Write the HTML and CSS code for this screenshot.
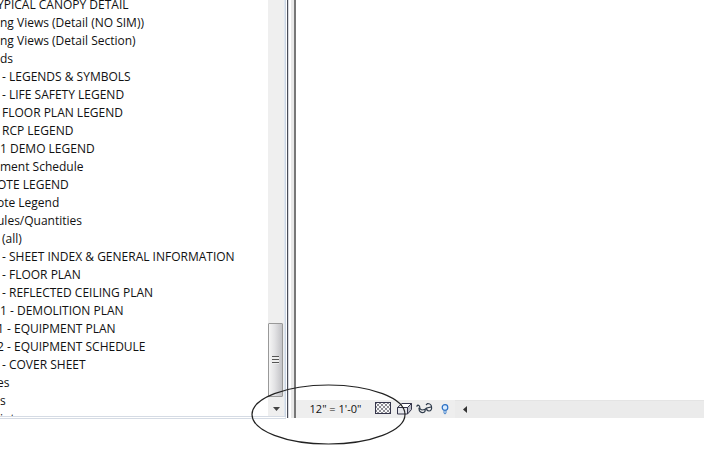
FILE: index.html
```
<!DOCTYPE html>
<html lang="en">
<head>
    <meta charset="UTF-8">
    <meta name="viewport" content="width=device-width, initial-scale=1.0">
    <title>Project Browser</title>
    <link rel="stylesheet" href="styles.css">
</head>
<body>
    <div class="workspace">

        <!-- project browser tree -->
        <div class="browser">
            <ul class="tree">
                <li class="cut">YPICAL CANOPY DETAIL</li>
                <li>ng Views (Detail (NO SIM))</li>
                <li>ng Views (Detail Section)</li>
                <li>ds</li>
                <li class="sub">- LEGENDS &amp; SYMBOLS</li>
                <li class="sub">- LIFE SAFETY LEGEND</li>
                <li class="sub">FLOOR PLAN LEGEND</li>
                <li class="sub">RCP LEGEND</li>
                <li>1 DEMO LEGEND</li>
                <li>ment Schedule</li>
                <li class="cut">OTE LEGEND</li>
                <li class="cut">ote Legend</li>
                <li class="cut">ules/Quantities</li>
                <li class="sub">(all)</li>
                <li class="sub">- SHEET INDEX &amp; GENERAL INFORMATION</li>
                <li class="sub">- FLOOR PLAN</li>
                <li class="sub">- REFLECTED CEILING PLAN</li>
                <li>1 - DEMOLITION PLAN</li>
                <li class="cut">1 - EQUIPMENT PLAN</li>
                <li class="cut">2 - EQUIPMENT SCHEDULE</li>
                <li class="sub">- COVER SHEET</li>
                <li class="cut">es</li>
                <li>s</li>
                <li>int</li>
            </ul>
            <div class="scrollbar">
                <div class="thumb"><span class="grip"></span></div>
                <button class="scroll-down" type="button" aria-label="Scroll down">
                    <svg width="7" height="4" viewBox="0 0 7 4"><path d="M0 0h7L3.500 4z" fill="#444"/></svg>
                </button>
            </div>
        </div>

        <div class="splitter"></div>

        <!-- drawing area with the view control bar -->
        <div class="view">
            <div class="canvas"></div>
            <div class="control-bar">
                <button class="scale" type="button">12" = 1'-0"</button>
                <button class="tool" type="button" aria-label="Detail level">
                    <svg width="19" height="15" viewBox="0 0 19 15">
                        <defs>
                            <pattern id="check" width="4" height="4" patternUnits="userSpaceOnUse">
                                <rect width="4" height="4" fill="#f8f8fa"/>
                                <path d="M0 0h2v2H0zM2 2h2v2H2z" fill="#8e8e94"/>
                            </pattern>
                        </defs>
                        <rect x=".5" y=".5" width="15" height="11" fill="url(#check)" stroke="#34344a"/>
                    </svg>
                </button>
                <button class="tool" type="button" aria-label="Visual style">
                    <svg width="16" height="15" viewBox="0 0 16 15">
                        <path d="M.5 5.500L5 1.500h9.500l-4 4z" fill="#fff" stroke="#34344a"/>
                        <path d="M10.500 5.500l4-4v6l-4 4.500z" fill="#b9bcc6" stroke="#34344a"/>
                        <path d="M.5 5.500h10v6.500H.5z" fill="#e6e7ec" stroke="#34344a"/>
                    </svg>
                </button>
                <button class="tool" type="button" aria-label="Hide or isolate">
                    <svg width="17" height="15" viewBox="0 0 17 15" fill="none" stroke="#303c4c" stroke-width="1.200">
                        <path d="M.5 4.500L2 3l1.500 1L4 7"/>
                        <path d="M3 6.500c0 3 2 4.500 4.500 4C9 10 9.500 8.500 9 7.500L6 8z"/>
                        <path d="M9 7.500L10.500 6l5-1c.5 2-.5 4-2.500 4s-2.500-1.500-2.500-3"/>
                        <path d="M15.500 5c0-2-2-3.500-4-3.500L10 3"/>
                    </svg>
                </button>
                <button class="tool" type="button" aria-label="Reveal hidden elements">
                    <svg width="16" height="15" viewBox="0 0 16 15">
                        <circle cx="9" cy="5.500" r="2.800" fill="#d9ecff" stroke="#2a6fc4" stroke-width="1.200"/>
                        <path d="M7.500 8.500h3V11L9 12.500 7.500 11z" fill="#4d86c8"/>
                        <path d="M8.500 9h1v2h-1z" fill="#d9ecff"/>
                    </svg>
                </button>
                <div class="hscroll">
                    <button class="scroll-left" type="button" aria-label="Scroll left">
                        <svg width="4" height="7" viewBox="0 0 4 7"><path d="M4 0v7L0 3.500z" fill="#333"/></svg>
                    </button>
                </div>
            </div>
        </div>

        <!-- callout round the view scale -->
        <svg class="callout" width="155" height="61" viewBox="0 0 155 61">
            <ellipse cx="77.500" cy="30.500" rx="76.500" ry="29.500" fill="none" stroke="#222" stroke-width="1.200"/>
        </svg>
    </div>
</body>
</html>
```
FILE: styles.css
```
* {
    box-sizing: border-box;
}

body {
    margin: 0;
    background-color: #fff;
    color: #111;
    font-family: "Open Sans", "Noto Sans", sans-serif;
    font-size: 12px;
}

button {
    padding: 0;
    border: none;
    background: none;
    color: inherit;
    font: inherit;
}

svg {
    display: block;
}

.workspace {
    position: relative;
    display: flex;
    height: 100vh;
    padding-bottom: 35px;
}

/* project browser */
.browser {
    display: flex;
    width: 286px;
    border-right: 1px solid #ccd6e4;
    border-bottom: 3px double #d5dbe4;
    overflow: hidden;
}

.tree {
    flex: 1;
    margin: -4px 0 0;
    padding: 0;
    list-style: none;
    line-height: 18px;
    white-space: nowrap;
}

.tree .sub {
    padding-left: 2px;
}

.tree .cut {
    text-indent: -3px;
}

.scrollbar {
    display: flex;
    flex-direction: column;
    justify-content: flex-end;
    width: 17px;
    border-right: 1px solid #dfe6ef;
    background-color: #efefef;
}

.thumb {
    display: flex;
    align-items: center;
    justify-content: center;
    height: 74px;
    margin-right: 1px;
    border: 1px solid #999;
    border-radius: 1px;
    background: linear-gradient(to right, #f5f5f5, #e2e2e4 45%, #c2c2c6);
}

.grip {
    width: 7px;
    height: 8px;
    background: repeating-linear-gradient(#555 0 1px, #eee 1px 3px);
}

.scroll-down {
    display: flex;
    align-items: center;
    justify-content: center;
    height: 19px;
    padding-top: 4px;
}

/* divider between the two panes */
.splitter {
    width: 10px;
    margin-bottom: 1px;
    background: linear-gradient(to right, #fff 0 1px, #4a4d58 1px 2px, #d8dae0 2px 3px, #fff 3px 5px, #e8e8e8 5px 8px, #777 8px);
}

/* drawing area */
.view {
    display: flex;
    flex: 1;
    flex-direction: column;
    margin-bottom: 1px;
}

.canvas {
    flex: 1;
}

.control-bar {
    display: flex;
    align-items: center;
    height: 18px;
    background-color: #eee;
}

.scale {
    width: 79px;
    font-size: 11px;
    line-height: 16px;
}

.tool {
    margin-right: 3px;
}

.hscroll {
    flex: 1;
    align-self: stretch;
    display: flex;
    border-top: 1px solid #e4e4e4;
    background-color: #ebebeb;
}

.scroll-left {
    display: flex;
    align-items: center;
    justify-content: center;
    width: 20px;
}

.callout {
    position: absolute;
    top: 384px;
    left: 251px;
}
```
